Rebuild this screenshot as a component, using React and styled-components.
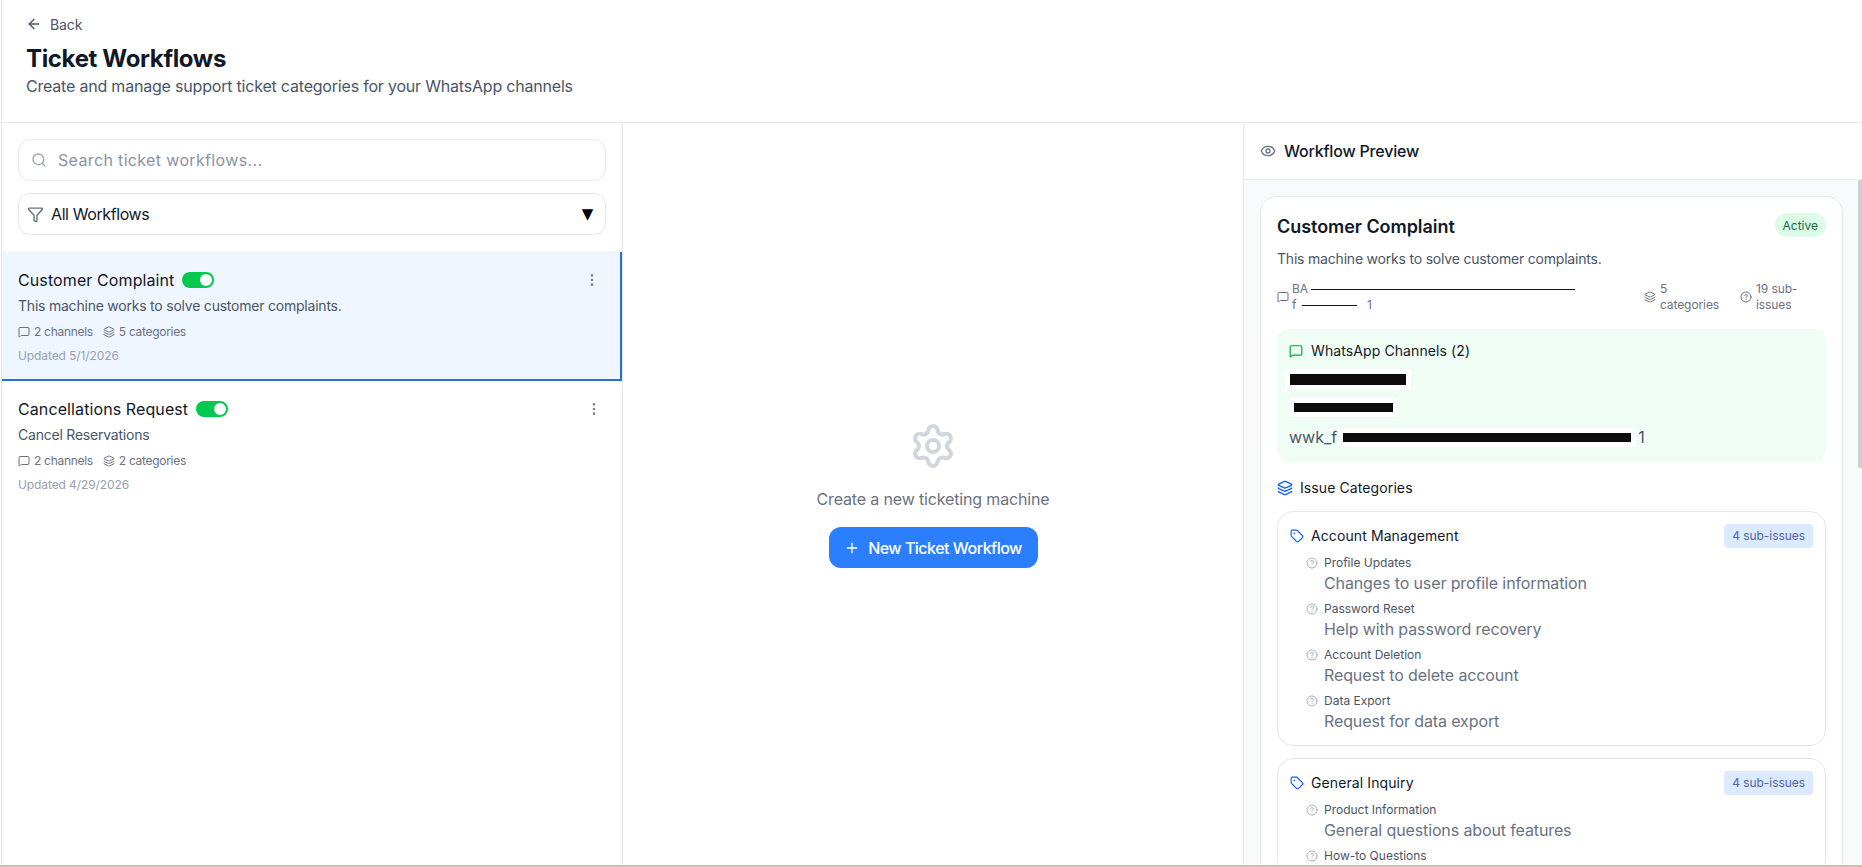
import React from 'react'
import styled, { createGlobalStyle } from 'styled-components'
import {
  ArrowLeft,
  CircleHelp,
  EllipsisVertical,
  Eye,
  Funnel,
  Layers,
  MessageSquare,
  Plus,
  Search,
  Settings,
  Tag
} from 'lucide-react'

const GlobalStyle = createGlobalStyle`
  * { box-sizing: border-box; }
  html, body { margin: 0; height: 100%; background: white; overflow: hidden; }
  body { font-family: Inter, "Noto Sans", sans-serif; color: #111827; }
`

const Page = styled.div`
  height: 865px;
  margin-left: 1px;
  display: flex;
  flex-direction: column;
  border-left: 1px solid #e5e7eb;
  background: white;
`

const BottomLine = styled.div`
  height: 2px;
  background: #c4c3ba;
`

const Header = styled.header`
  height: 123px;
  flex-shrink: 0;
  padding: 14px 24px 0;
  border-bottom: 1px solid #e5e7eb;
`

const BackLink = styled.a`
  display: inline-flex;
  align-items: center;
  gap: 8px;
  height: 20px;
  font-size: 14px;
  letter-spacing: -0.1px;
  color: #4b5563;
`

const Title = styled.h1`
  margin: 8px 0 0;
  font-size: 24px;
  line-height: 30px;
  font-weight: 700;
  letter-spacing: -0.35px;
  color: #101828;
`

const Subtitle = styled.p`
  margin: 0;
  font-size: 16px;
  line-height: 24px;
  letter-spacing: -0.2px;
  color: #4a5565;
`

const Columns = styled.div`
  flex: 1;
  min-height: 0;
  display: grid;
  grid-template-columns: 621px 621px 1fr;
`

const Sidebar = styled.aside`
  border-right: 1px solid #e5e7eb;
  display: flex;
  flex-direction: column;
`

const Filters = styled.div`
  padding: 16px 16px 16px;
  display: flex;
  flex-direction: column;
  gap: 12px;
  border-bottom: 1px solid #f3f4f6;
`

const Field = styled.div`
  height: 42px;
  display: flex;
  align-items: center;
  gap: ${props => props.$gap || 11}px;
  padding: 0 12px 0 ${props => props.$left || 12}px;
  border: 1px solid #e5e7eb;
  border-radius: 12px;
  font-size: 16px;
  letter-spacing: ${props => props.$muted ? '0.35px' : '-0.4px'};
  color: ${props => props.$muted ? '#8b93a0' : '#111827'};
  svg { color: ${props => props.$muted ? '#9ca3af' : '#6a7282'}; flex-shrink: 0; }
`

const Arrow = styled.span`
  margin-left: auto;
  font-family: "DejaVu Sans", sans-serif;
  font-size: 15px;
  color: black;
`

const WorkflowItem = styled.div`
  padding: 16px 20px 16px 16px;
  display: flex;
  align-items: flex-start;
  justify-content: space-between;
  background: ${props => props.$active ? '#eff6ff' : 'white'};
  border-right: ${props => props.$active ? '2px solid #2b6fd6' : '0'};
  border-bottom: ${props => props.$active ? '2px solid #2b6fd6' : '0'};
  height: 129px;
`

const ItemTitleRow = styled.div`
  display: flex;
  align-items: center;
  gap: 8px;
  font-size: 16px;
  line-height: 24px;
  font-weight: 400;
  letter-spacing: 0.1px;
  color: #101828;
`

const Toggle = styled.span`
  width: 32px;
  height: 16px;
  border-radius: 8px;
  background: #00c950;
  display: flex;
  align-items: center;
  justify-content: flex-end;
  padding-right: 2px;
  &::after {
    content: '';
    width: 12px;
    height: 12px;
    border-radius: 50%;
    background: white;
  }
`

const ItemDesc = styled.p`
  margin: 4px 0 0;
  font-size: 14px;
  line-height: 20px;
  letter-spacing: -0.22px;
  color: #4a5565;
`

const ItemStats = styled.div`
  margin-top: 8px;
  display: flex;
  gap: 10px;
  font-size: 12px;
  line-height: 16px;
  letter-spacing: -0.3px;
  color: #6a7282;
`

const ItemStat = styled.span`
  display: inline-flex;
  align-items: center;
  gap: 4px;
`

const Updated = styled.div`
  margin-top: 8px;
  font-size: 12px;
  line-height: 16px;
  letter-spacing: -0.1px;
  color: #99a1af;
`

const Kebab = styled.span`
  color: #7b8494;
  display: flex;
  margin-top: 4px;
`

const Center = styled.main`
  border-right: 1px solid #e5e7eb;
  display: flex;
  flex-direction: column;
  align-items: center;
  justify-content: center;
  padding-top: 2px;
`

const EmptyText = styled.p`
  margin: 17px 0 16px;
  font-size: 16px;
  line-height: 24px;
  letter-spacing: -0.15px;
  color: #6a7282;
`

const PrimaryButton = styled.button`
  height: 41px;
  width: 209px;
  display: flex;
  align-items: center;
  justify-content: center;
  gap: 8px;
  border: 0;
  border-radius: 12px;
  background: #2b7fff;
  color: white;
  font: 500 16px Inter, sans-serif;
  letter-spacing: -0.5px;
`

const Preview = styled.section`
  position: relative;
  display: flex;
  flex-direction: column;
  min-height: 0;
`

const PreviewHeader = styled.div`
  height: 57px;
  flex-shrink: 0;
  display: flex;
  align-items: center;
  gap: 8px;
  padding: 0 16px;
  border-bottom: 1px solid #e5e7eb;
  font-size: 16px;
  font-weight: 500;
  letter-spacing: -0.2px;
  color: #101828;
  svg { color: #6a7282; }
`

const PreviewBody = styled.div`
  flex: 1;
  min-height: 0;
  overflow: hidden;
  padding: 16px 19px 16px 16px;
  background: #f9fafb;
`

const ScrollThumb = styled.div`
  position: absolute;
  top: 57px;
  right: 0;
  width: 4px;
  height: 288px;
  background: #cdcfd3;
  border-radius: 2px 0 0 2px;
`

const Card = styled.div`
  background: white;
  border: 1px solid #e5e7eb;
  border-radius: 16px;
  padding: ${props => props.$padding || 16}px;
`

const CardTop = styled.div`
  display: flex;
  justify-content: space-between;
  align-items: flex-start;
`

const CardTitle = styled.h2`
  margin: 0;
  font-size: 18px;
  line-height: 28px;
  font-weight: 600;
  letter-spacing: -0.05px;
  color: #101828;
`

const ActiveBadge = styled.span`
  height: 24px;
  padding: 0 8px;
  display: flex;
  align-items: center;
  border-radius: 12px;
  background: #dcfce7;
  color: #1b6b3f;
  font-size: 12px;
`

const CardDesc = styled.p`
  margin: 8px 0 0;
  font-size: 14px;
  line-height: 20px;
  letter-spacing: -0.2px;
  color: #4a5565;
`

const StatsRow = styled.div`
  margin-top: 12px;
  display: grid;
  grid-template-columns: 1fr 76px 86px;
  gap: 20px;
  font-size: 12px;
  line-height: 16px;
  letter-spacing: -0.1px;
  color: #6a7282;
`

const Stat = styled.div`
  display: flex;
  align-items: center;
  gap: ${props => props.$gap || 4}px;
  svg { flex-shrink: 0; }
`

const StatText = styled.span`
  max-width: ${props => props.$width}px;
`

const StatLines = styled.div`
  display: flex;
  flex-direction: column;
`

const StatLine = styled.span`
  display: flex;
  align-items: center;
  gap: 3px;
  height: 16px;
  white-space: nowrap;
`

const Scribble = styled.i`
  display: block;
  height: 1px;
  background: #111;
  width: ${props => props.$width}px;
  margin-left: ${props => props.$left || 0}px;
`

const ChannelBox = styled.div`
  margin-top: 16px;
  padding: 12px 12px 13px;
  border-radius: 12px;
  background: #f0fdf4;
`

const ChannelTitle = styled.div`
  display: flex;
  align-items: center;
  gap: 8px;
  font-size: 14px;
  line-height: 20px;
  font-weight: 400;
  letter-spacing: 0.1px;
  color: #101828;
  svg { color: #00a63e; }
`

const ChannelLine = styled.div`
  display: flex;
  align-items: center;
  margin-top: ${props => props.$top || 0}px;
  height: 24px;
  font-size: 16px;
  color: #4a5565;
`

const Redacted = styled.span`
  display: block;
  width: ${props => props.$width}px;
  height: ${props => props.$height || 11}px;
  background: #0c0c0c;
  box-shadow: 0 0 0 ${props => props.$halo || 5}px white;
  margin: 0 ${props => props.$right || 0}px 0 ${props => props.$left || 0}px;
`

const SectionTitle = styled.div`
  margin-top: 16px;
  margin-bottom: 13px;
  display: flex;
  align-items: center;
  gap: 7px;
  font-size: 14px;
  line-height: 20px;
  font-weight: 400;
  letter-spacing: 0.1px;
  color: #101828;
  svg { color: #155dfc; }
`

const CategoryList = styled.div`
  display: flex;
  flex-direction: column;
  gap: 12px;
`

const CategoryHead = styled.div`
  display: flex;
  align-items: center;
  gap: 7px;
  font-size: 14px;
  line-height: 20px;
  font-weight: 400;
  letter-spacing: 0.1px;
  color: #101828;
  svg { color: #155dfc; }
`

const CountBadge = styled.span`
  margin-left: auto;
  height: 24px;
  padding: 0 8px;
  display: flex;
  align-items: center;
  border-radius: 4px;
  background: #dbeafe;
  color: #5563a8;
  font-size: 12px;
  font-weight: 400;
  letter-spacing: -0.05px;
`

const Issues = styled.div`
  margin-top: 7px;
  padding-left: 16px;
  display: flex;
  flex-direction: column;
  gap: 6px;
`

const Issue = styled.div`
  display: grid;
  grid-template-columns: 12px 1fr;
  column-gap: 6px;
`

const IssueName = styled.div`
  font-size: 12px;
  line-height: 16px;
  color: #4a5565;
  grid-column: 2;
`

const IssueIcon = styled.span`
  grid-column: 1;
  grid-row: 1;
  display: flex;
  align-items: center;
  color: #a9b0bc;
`

const IssueDesc = styled.div`
  grid-column: 2;
  font-size: 16px;
  line-height: 24px;
  letter-spacing: -0.12px;
  color: #6a7282;
`

const workflows = [
  {
    name: 'Customer Complaint',
    desc: 'This machine works to solve customer complaints.',
    categories: 5,
    updated: '5/1/2026',
    active: true
  },
  {
    name: 'Cancellations Request',
    desc: 'Cancel Reservations',
    categories: 2,
    updated: '4/29/2026'
  }
]

const categories = [
  {
    name: 'Account Management',
    count: 4,
    issues: [
      ['Profile Updates', 'Changes to user profile information'],
      ['Password Reset', 'Help with password recovery'],
      ['Account Deletion', 'Request to delete account'],
      ['Data Export', 'Request for data export']
    ]
  },
  {
    name: 'General Inquiry',
    count: 4,
    issues: [
      ['Product Information', 'General questions about features'],
      ['How-to Questions']
    ]
  }
]

export default function App() {
  return (
    <>
      <GlobalStyle />
      <Page>
        <Header>
          <BackLink><ArrowLeft size={16} />Back</BackLink>
          <Title>Ticket Workflows</Title>
          <Subtitle>Create and manage support ticket categories for your WhatsApp channels</Subtitle>
        </Header>
        <Columns>
          <Sidebar>
            <Filters>
              <Field $muted>
                <Search size={16} />
                Search ticket workflows...
              </Field>
              <Field $gap={7} $left={8}>
                <Funnel size={17} />
                All Workflows
                <Arrow>▼</Arrow>
              </Field>
            </Filters>
            {workflows.map(w => (
              <WorkflowItem key={w.name} $active={w.active}>
                <div>
                  <ItemTitleRow>{w.name}<Toggle /></ItemTitleRow>
                  <ItemDesc>{w.desc}</ItemDesc>
                  <ItemStats>
                    <ItemStat><MessageSquare size={12} />2 channels</ItemStat>
                    <ItemStat><Layers size={12} />{w.categories} categories</ItemStat>
                  </ItemStats>
                  <Updated>Updated {w.updated}</Updated>
                </div>
                <Kebab><EllipsisVertical size={16} /></Kebab>
              </WorkflowItem>
            ))}
          </Sidebar>
          <Center>
            <Settings size={48} color="#d1d5dc" strokeWidth={2} />
            <EmptyText>Create a new ticketing machine</EmptyText>
            <PrimaryButton><Plus size={16} />New Ticket Workflow</PrimaryButton>
          </Center>
          <Preview>
            <PreviewHeader><Eye size={16} />Workflow Preview</PreviewHeader>
            <PreviewBody>
              <Card>
                <CardTop>
                  <CardTitle>Customer Complaint</CardTitle>
                  <ActiveBadge>Active</ActiveBadge>
                </CardTop>
                <CardDesc>This machine works to solve customer complaints.</CardDesc>
                <StatsRow>
                  <Stat $gap={3}>
                    <MessageSquare size={12} />
                    <StatLines>
                      <StatLine>BA<Scribble $width={264} /></StatLine>
                      <StatLine>f<Scribble $width={55} $left={3} />&nbsp;&nbsp;1</StatLine>
                    </StatLines>
                  </Stat>
                  <Stat>
                    <Layers size={12} />
                    <span>5 categories</span>
                  </Stat>
                  <Stat>
                    <CircleHelp size={12} />
                    <StatText $width={46}>19 sub-issues</StatText>
                  </Stat>
                </StatsRow>
                <ChannelBox>
                  <ChannelTitle><MessageSquare size={14} />WhatsApp Channels (2)</ChannelTitle>
                  <ChannelLine $top={6}><Redacted $width={116} $left={1} /></ChannelLine>
                  <ChannelLine $top={4}><Redacted $width={99} $height={9} $left={5} /></ChannelLine>
                  <ChannelLine $top={6}>wwk_f<Redacted $width={288} $height={9} $left={6} $right={7} />1</ChannelLine>
                </ChannelBox>
                <SectionTitle><Layers size={16} />Issue Categories</SectionTitle>
                <CategoryList>
                  {categories.map(c => (
                    <Card key={c.name} $padding={12}>
                      <CategoryHead>
                        <Tag size={14} />
                        {c.name}
                        <CountBadge>{c.count} sub-issues</CountBadge>
                      </CategoryHead>
                      <Issues>
                        {c.issues.map(([name, desc]) => (
                          <Issue key={name}>
                            <IssueIcon><CircleHelp size={12} /></IssueIcon>
                            <IssueName>{name}</IssueName>
                            {desc && <IssueDesc>{desc}</IssueDesc>}
                          </Issue>
                        ))}
                      </Issues>
                    </Card>
                  ))}
                </CategoryList>
              </Card>
            </PreviewBody>
            <ScrollThumb />
          </Preview>
        </Columns>
      </Page>
      <BottomLine />
    </>
  )
}
